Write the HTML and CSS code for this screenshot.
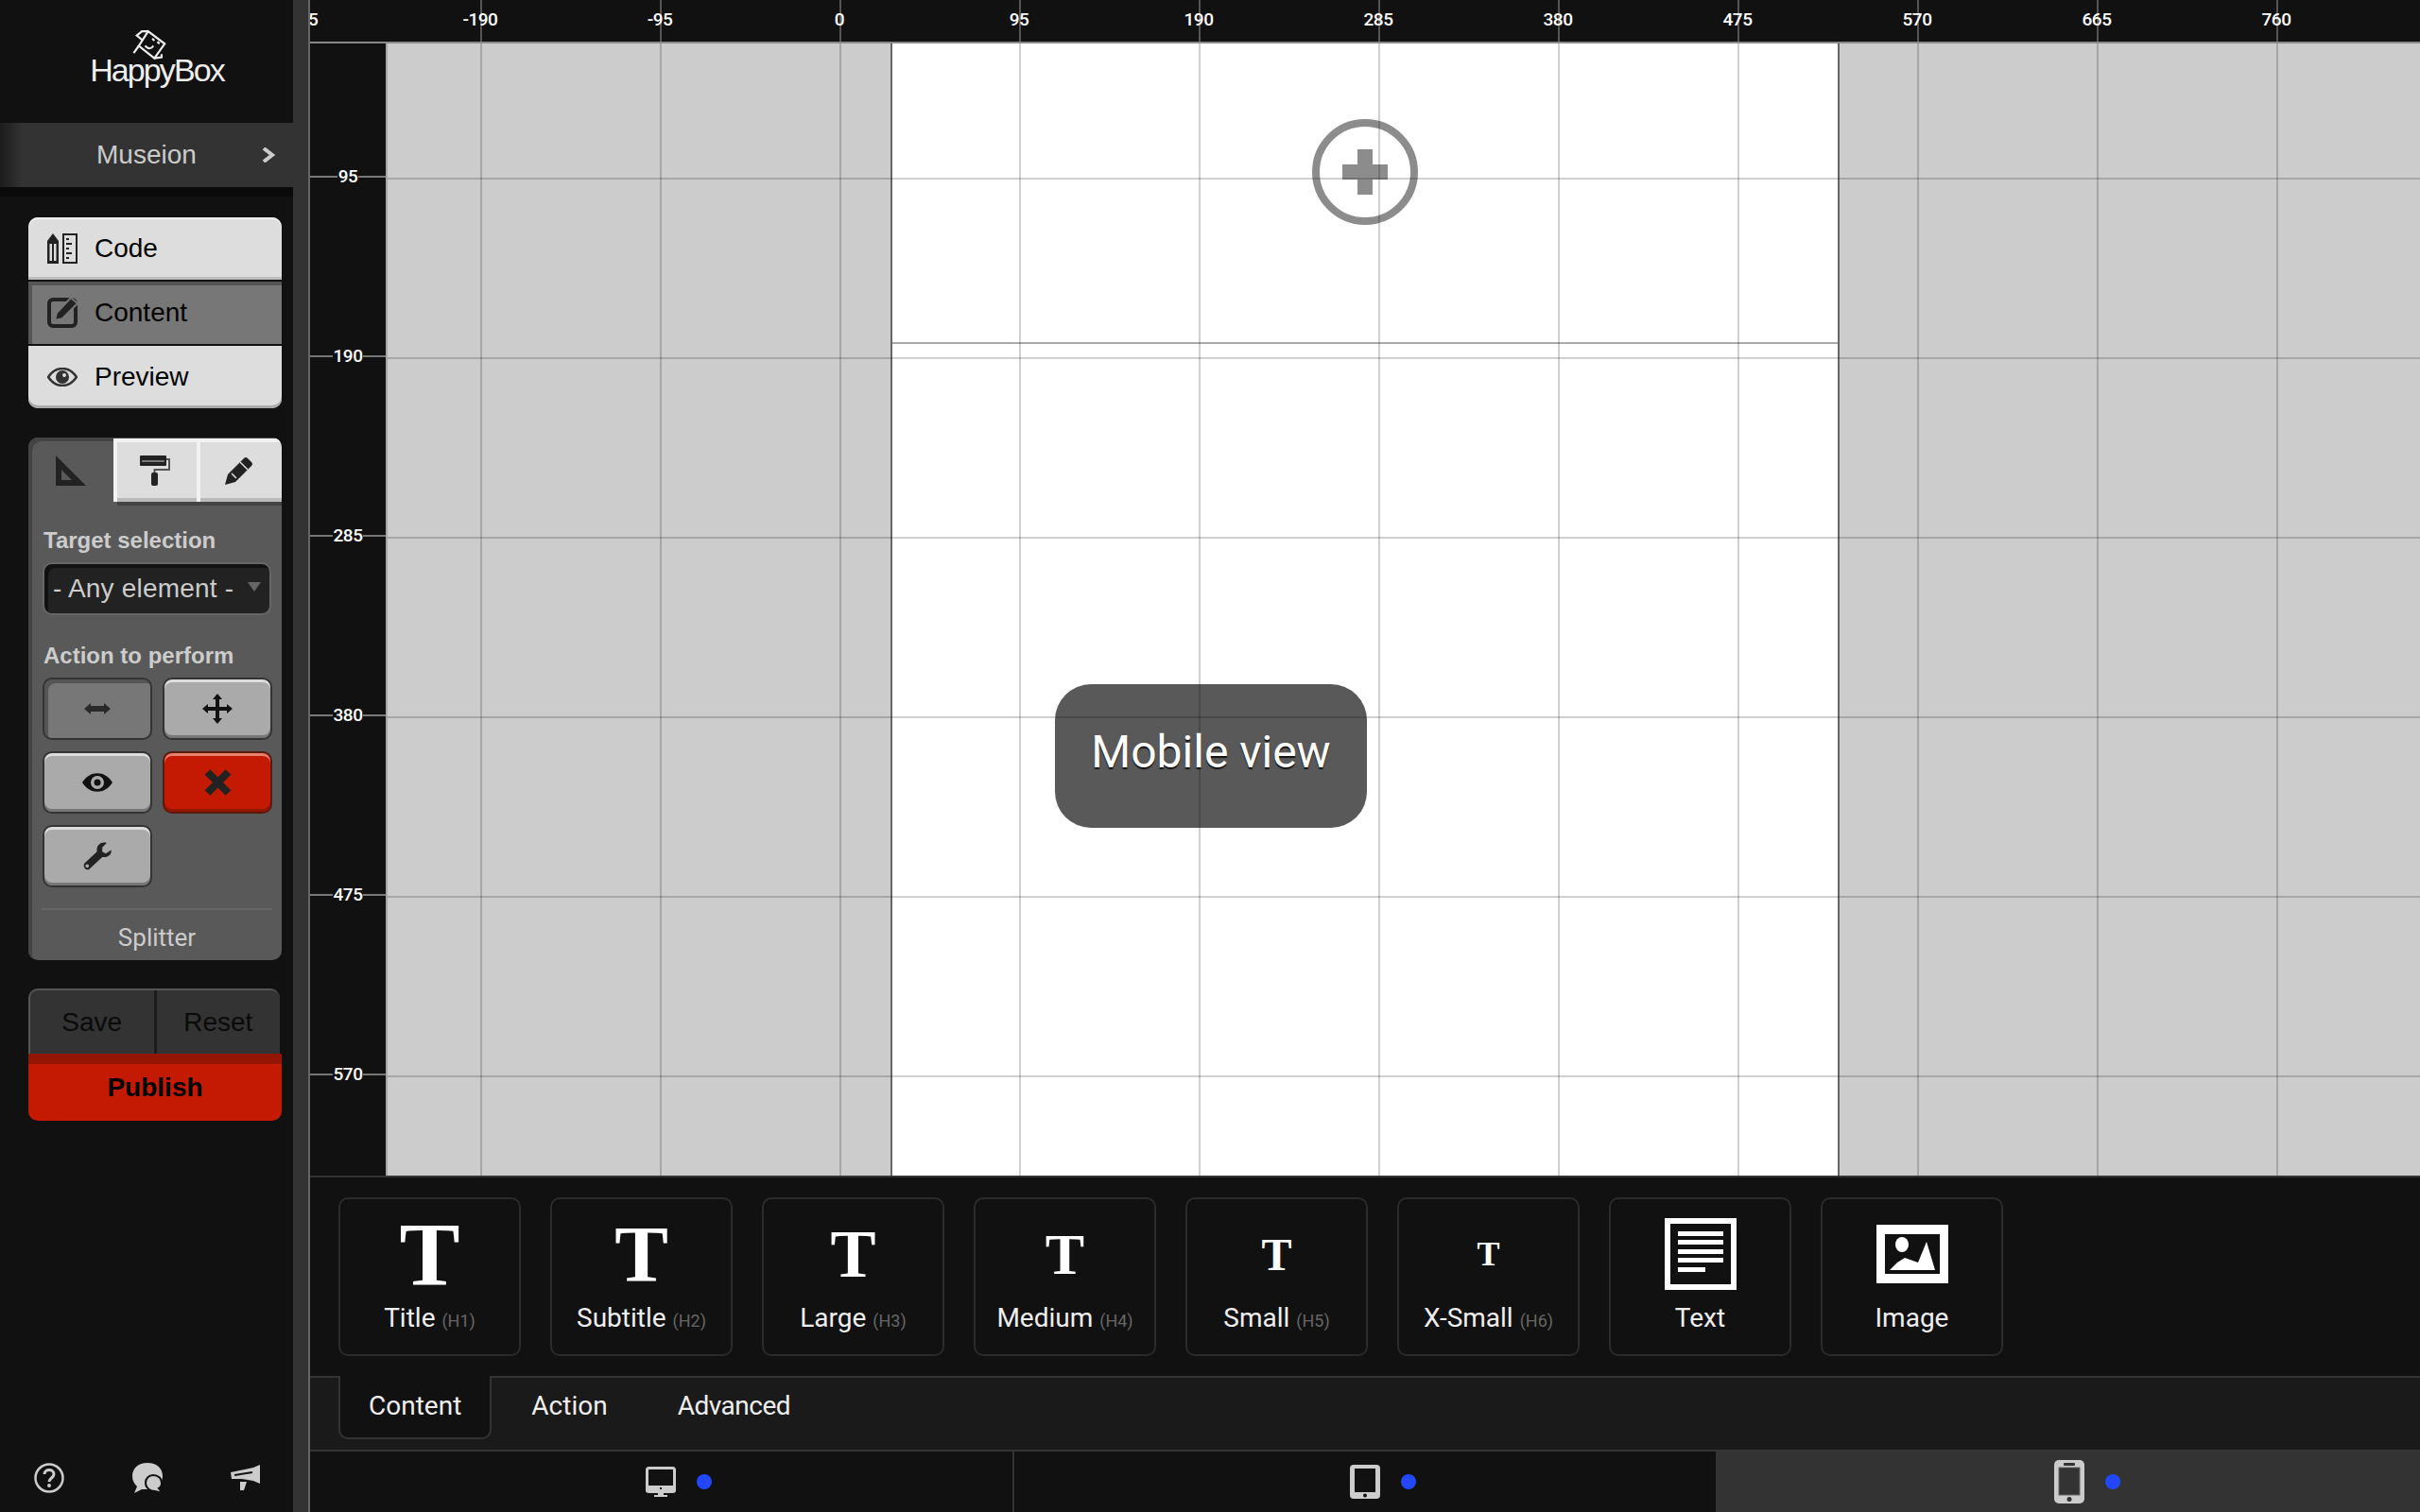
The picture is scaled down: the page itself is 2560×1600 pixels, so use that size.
FILE: index.html
```html
<!DOCTYPE html>
<html>
  <head>
    <meta charset="utf-8">
    <title>HappyBox</title>
    <link rel="stylesheet" href="styles.css">
  </head>
  <body>
    <div class="sidebar">
      <div class="logo">
        <svg class="logo-bot" viewBox="0 0 40 32" width="44" height="35" fill="none" stroke="#eee" stroke-width="2">
          <path d="M17 2 L33 14 L23 28 L8 16 Z"/>
          <path d="M12 11 L6 6 L11 2 L17 2"/>
          <path d="M8 16 L3 23 M23 28 L30 27 L30 24"/>
          <path d="M21 9 L23 11 M26 12 L28 14 M14 16 Q19 21 22 16"/>
        </svg>
        <div class="logo-text">HappyBox</div>
      </div>
      <div class="project">
        <span>Museion</span>
        <svg class="project-arrow" viewBox="0 0 16 16" width="16" height="16" fill="none" stroke="#ccc" stroke-width="4"><path d="M3 1 L12 8 L3 15"/></svg>
      </div>

      <div class="modes">
        <div class="mode mode-first">
          <svg viewBox="0 0 32 32" width="32" height="32">
            <path d="M0 8 L6 0 L12 8 V32 H0 Z" fill="#222"/>
            <rect x="2.5" y="11" width="2.5" height="18" fill="#ddd"/>
            <rect x="7" y="11" width="2.5" height="18" fill="#ddd"/>
            <rect x="17" y="1" width="14" height="30" fill="none" stroke="#222" stroke-width="2"/>
            <path d="M20 6 h3 M20 11 h6 M20 16 h3 M20 21 h6 M20 26 h3" stroke="#222" stroke-width="2"/>
          </svg>
          Code
        </div>
        <div class="mode mode-on">
          <svg viewBox="0 0 32 32" width="32" height="32">
            <rect x="2" y="2" width="28" height="28" rx="4" fill="none" stroke="#222" stroke-width="4"/>
            <path d="M8 24 L10 16 L25 0 L32 6 L16 22 Z" fill="#222" stroke="#777" stroke-width="2"/>
          </svg>
          Content
        </div>
        <div class="mode mode-last">
          <svg viewBox="0 0 32 20" width="32" height="20">
            <path d="M1 10 C9 -2 23 -2 31 10 C23 22 9 22 1 10 Z" fill="#ddd" stroke="#333" stroke-width="2.5"/>
            <circle cx="16" cy="10" r="7" fill="#333"/>
            <circle cx="18" cy="8" r="2" fill="#ddd"/>
          </svg>
          Preview
        </div>
      </div>

      <div class="panel">
        <div class="panel-tabs">
          <div class="panel-tab panel-tab-on">
            <svg viewBox="0 0 32 32" width="32" height="32"><path fill-rule="evenodd" d="M0 0 L32 32 H0 Z M6 15 V26 H17 Z" fill="#222"/></svg>
          </div>
          <div class="panel-tab">
            <svg viewBox="0 0 32 32" width="32" height="32">
              <rect x="0" y="0" width="28" height="11" rx="1" fill="#222"/>
              <rect x="2" y="5" width="24" height="2" fill="#777"/>
              <path d="M28 4 H31 V15 H15.500 V18" fill="none" stroke="#555" stroke-width="2"/>
              <rect x="12" y="18" width="7" height="14" rx="2" fill="#222"/>
            </svg>
          </div>
          <div class="panel-tab">
            <svg viewBox="0 0 32 32" width="32" height="32">
              <path d="M1 31 L4 20 L21 3 Q23 1 25 3 L29 7 Q31 9 29 11 L12 28 Z" fill="#222"/>
              <path d="M8 19 L13 24 M17 7 L25 15" stroke="#ddd" stroke-width="1.500"/>
            </svg>
          </div>
        </div>
        <div class="panel-body">
          <div class="panel-label">Target selection</div>
          <div class="select">
            <span>- Any element -</span>
            <i class="select-arrow"></i>
          </div>
          <div class="panel-label panel-label-next">Action to perform</div>
          <div class="actions">
            <div class="action action-on">
              <svg viewBox="0 0 28 12" width="28" height="12"><path d="M0 6 L7 0 V3 H21 V0 L28 6 L21 12 V9 H7 V12 Z" fill="#2a2a2a"/></svg>
            </div>
            <div class="action">
              <svg viewBox="0 0 32 32" width="32" height="32"><path d="M16 0 L21 6 H18 V14 H26 V11 L32 16 L26 21 V18 H18 V26 H21 L16 32 L11 26 H14 V18 H6 V21 L0 16 L6 11 V14 H14 V6 H11 Z" fill="#111"/></svg>
            </div>
            <div class="action">
              <svg viewBox="0 0 32 20" width="32" height="20">
                <path fill-rule="evenodd" d="M0 10 C8 -3 24 -3 32 10 C24 23 8 23 0 10 Z M16 3 A7 7 0 1 0 16 17 A7 7 0 1 0 16 3 Z" fill="#111"/>
                <circle cx="16" cy="10" r="3.500" fill="#111"/>
              </svg>
            </div>
            <div class="action action-red">
              <svg viewBox="0 0 28 28" width="29" height="28"><path d="M3 3 L25 25 M25 3 L3 25" fill="none" stroke="#222" stroke-width="8"/></svg>
            </div>
            <div class="action">
              <svg viewBox="0 0 32 32" width="31" height="30"><path fill-rule="evenodd" d="M31 9 L25 13 L21 11 L21 6 L26 1 C20 -1 14 3 15 11 L1 24 C-1 27 1 30 3 31 C6 32 7 30 8 29 L21 17 C27 18 32 14 31 9 Z M4 25 A2 2 0 1 0 4 29 A2 2 0 1 0 4 25 Z" fill="#222"/></svg>
            </div>
          </div>
          <div class="panel-line"></div>
          <div class="panel-foot">Splitter</div>
        </div>
      </div>

      <div class="save-row">
        <div class="save-btn">Save</div>
        <div class="save-btn">Reset</div>
      </div>
      <div class="publish">Publish</div>

      <div class="side-foot">
        <svg viewBox="0 0 32 32" width="32" height="32">
          <circle cx="16" cy="16" r="14.500" fill="none" stroke="#ccc" stroke-width="2.500"/>
          <path d="M11 12 C11 6 21 6 21 12 C21 16 16 16 16 20" fill="none" stroke="#ccc" stroke-width="3"/>
          <circle cx="16" cy="24" r="2" fill="#ccc"/>
        </svg>
        <svg viewBox="0 0 32 32" width="32" height="32">
          <path d="M16 0 C26 0 32 6 32 14 C32 22 26 26 22 28 H10 L2 32 L5 25 C2 22 0 19 0 14 C0 6 6 0 16 0 Z" fill="#ccc"/>
          <path d="M22 13 C28 13 31 17 31 21 C31 24 30 26 28 27 L32 32 L24 30 C18 30 14 26 14 21 C14 17 17 13 22 13 Z" fill="#ccc" stroke="#111" stroke-width="2"/>
        </svg>
        <svg viewBox="0 0 32 28" width="32" height="28">
          <path d="M0 8 L24 3 L31 0 V20 L24 17 L12 15 H1 Z" fill="#ccc"/>
          <path d="M4 11 L23 8" stroke="#111" stroke-width="2"/>
          <path d="M10 18 L17 18 L14 27 L10 27 Z" fill="#ccc"/>
        </svg>
      </div>
    </div>
    <div class="sidebar-edge"></div>

    <div class="main">
      <div class="ruler-top">
        <span>-285</span><span>-190</span><span>-95</span><span>0</span><span>95</span><span>190</span><span>285</span><span>380</span><span>475</span><span>570</span><span>665</span><span>760</span>
      </div>
      <div class="stage">
        <div class="ruler-left">
          <div class="rl"><span>95</span></div>
          <div class="rl"><span>190</span></div>
          <div class="rl"><span>285</span></div>
          <div class="rl"><span>380</span></div>
          <div class="rl"><span>475</span></div>
          <div class="rl"><span>570</span></div>
        </div>
        <div class="canvas">
          <div class="page">
            <div class="page-head">
              <svg viewBox="0 0 112 112" width="112" height="112">
                <circle cx="56" cy="56" r="52" fill="none" stroke="#8c8c8c" stroke-width="8"/>
                <path d="M48 32 H64 V48 H80 V64 H64 V80 H48 V64 H32 V48 H48 Z" fill="#8c8c8c"/>
              </svg>
            </div>
          </div>
          <div class="grid-lines"></div>
          <div class="view-tip">Mobile view</div>
        </div>
      </div>

      <div class="items">
        <div class="item"><div class="item-icon t1">T</div><div class="item-name">Title <small>(H1)</small></div></div>
        <div class="item"><div class="item-icon t2">T</div><div class="item-name">Subtitle <small>(H2)</small></div></div>
        <div class="item"><div class="item-icon t3">T</div><div class="item-name">Large <small>(H3)</small></div></div>
        <div class="item"><div class="item-icon t4">T</div><div class="item-name">Medium <small>(H4)</small></div></div>
        <div class="item"><div class="item-icon t5">T</div><div class="item-name">Small <small>(H5)</small></div></div>
        <div class="item"><div class="item-icon t6">T</div><div class="item-name">X-Small <small>(H6)</small></div></div>
        <div class="item">
          <div class="item-icon">
            <svg viewBox="0 0 76 76" width="76" height="76">
              <rect x="3" y="3" width="70" height="70" fill="none" stroke="#fff" stroke-width="6"/>
              <path d="M14 14 H62 V19 H14 Z M14 23 H62 V28 H14 Z M14 33 H62 V38 H14 Z M14 42 H62 V47 H14 Z M14 52 H43 V57 H14 Z" fill="#fff"/>
            </svg>
          </div>
          <div class="item-name">Text</div>
        </div>
        <div class="item">
          <div class="item-icon">
            <svg viewBox="0 0 76 62" width="76" height="62">
              <path fill-rule="evenodd" d="M0 0 H76 V62 H0 Z M9 10 V52 H67 V10 Z" fill="#fff"/>
              <ellipse cx="27" cy="21" rx="7" ry="8" fill="#fff"/>
              <path d="M14 48 L22 40 L30 35 L44 40 L53 18 L62 48 Z" fill="#fff"/>
            </svg>
          </div>
          <div class="item-name">Image</div>
        </div>
      </div>

      <div class="tabs">
        <div class="tab tab-on">Content</div>
        <div class="tab">Action</div>
        <div class="tab">Advanced</div>
      </div>

      <div class="devices">
        <div class="device">
          <svg viewBox="0 0 32 32" width="32" height="32">
            <rect x="1.500" y="1.500" width="29" height="25" rx="2" fill="#111" stroke="#ccc" stroke-width="3"/>
            <rect x="0" y="20" width="32" height="7" rx="2" fill="#ccc"/>
            <rect x="15" y="22" width="2" height="2" fill="#111"/>
            <path d="M13 27 H19 V30 H23 V32 H9 V30 H13 Z" fill="#ccc"/>
          </svg>
          <i class="dot"></i>
        </div>
        <div class="device">
          <svg viewBox="0 0 32 36" width="32" height="36">
            <rect x="0" y="0" width="32" height="36" rx="4" fill="#ccc"/>
            <rect x="5" y="4" width="22" height="25" fill="#111"/>
            <circle cx="16" cy="32.500" r="2" fill="#111"/>
          </svg>
          <i class="dot"></i>
        </div>
        <div class="device device-on">
          <svg viewBox="0 0 32 46" width="32" height="46">
            <rect x="0" y="0" width="32" height="46" rx="5" fill="#ccc"/>
            <rect x="5" y="8" width="22" height="29" fill="#333" stroke="#666"/>
            <rect x="10" y="3" width="12" height="3" rx="1" fill="#333"/>
            <circle cx="16" cy="41.500" r="2.500" fill="#333"/>
          </svg>
          <i class="dot"></i>
        </div>
      </div>
    </div>
  </body>
</html>
```

FILE: styles.css
```css
* { box-sizing: border-box; }
html, body { margin: 0; height: 100%; }
body {
  display: flex;
  height: 1600px;
  overflow: hidden;
  background: #111;
  font-family: "Liberation Sans", Arial, sans-serif;
  color: #ccc;
}

/* left column */
.sidebar {
  width: 310px;
  display: flex;
  flex-direction: column;
  background: #111;
}
.sidebar-edge {
  width: 18px;
  background: #333;
  border-right: 2px solid #666;
}
.logo {
  height: 130px;
  padding: 31px 0 0 22px;
  display: flex;
  flex-direction: column;
  align-items: center;
}
.logo-bot { margin-left: -12px; }
.logo-text {
  margin-top: -11px;
  font-size: 34px;
  line-height: 38px;
  letter-spacing: -1.9px;
  color: #eee;
}
.project {
  height: 78px;
  border-bottom: 10px solid #0a0a0a;
  background: linear-gradient(90deg, #1c1c1c, #333 24px);
  display: flex;
  align-items: center;
  font-size: 28px;
  padding-left: 102px;
}
.project-arrow { margin-left: 68px; }

.modes {
  width: 268px;
  margin: 22px 0 0 30px;
  display: flex;
  flex-direction: column;
  gap: 2px;
}
.mode {
  height: 66px;
  padding-left: 20px;
  display: flex;
  align-items: center;
  gap: 18px;
  font-size: 28px;
  color: #000;
  background: #ddd;
  box-shadow: inset 0 -3px 0 #aaa;
}
.mode-first { border-radius: 10px 10px 0 0; box-shadow: inset 0 2px 0 #eee, inset 0 -3px 0 #bbb; }
.mode-last { border-radius: 0 0 10px 10px; box-shadow: inset 0 -3px 0 #aaa; }
.mode-on { background: #777; box-shadow: inset 4px 4px 0 #555; }

.panel {
  width: 268px;
  height: 553px;
  margin: 31px 0 0 30px;
  background: #595959;
  border-radius: 10px;
  box-shadow: inset 4px 4px 0 #444;
  overflow: hidden;
}
.panel-tabs {
  display: grid;
  grid-template-columns: 90px 88px 90px;
  height: 67px;
  margin-top: 1px;
}
.panel-tab {
  display: flex;
  align-items: center;
  justify-content: center;
  background: #ddd;
  box-shadow: inset 4px 4px 0 #f2f2f2, inset 0 -4px 0 #bbb, 4px 4px 0 #444;
}
.panel-tab-on { background: none; box-shadow: none; }
.panel-body { padding: 27px 11px 0 15px; }
.panel-label {
  margin-left: 1px;
  font-size: 24px;
  line-height: 28px;
  font-weight: bold;
  color: #ccc;
}
.panel-label-next { margin-top: 29px; }
.select {
  height: 56px;
  margin-top: 9px;
  padding: 0 9px;
  display: flex;
  align-items: center;
  justify-content: space-between;
  font-size: 28px;
  letter-spacing: .2px;
  color: #ccc;
  background: #222;
  border: 2px solid #666;
  border-radius: 10px;
  box-shadow: inset 4px 4px 0 #111;
}
.select-arrow {
  width: 0;
  height: 0;
  border-left: 7px solid transparent;
  border-right: 7px solid transparent;
  border-top: 10px solid #666;
  margin-bottom: 4px;
}
.actions {
  margin-top: 9px;
  display: grid;
  grid-template-columns: 116px 116px;
  grid-auto-rows: 66px;
  column-gap: 11px;
  row-gap: 12px;
}
.action {
  display: flex;
  align-items: center;
  justify-content: center;
  background: #aaa;
  border: 2px solid #333;
  border-radius: 10px;
  box-shadow: inset 0 3px 0 #ddd, inset 0 -3px 0 #777;
}
.action-on { background: #777; box-shadow: inset 4px 4px 0 #555; }
.action-red { background: #c41a03; border-color: #5a1a10; box-shadow: inset 0 3px 0 #e88070, inset 0 -3px 0 #951503; }
.panel-line { height: 2px; margin: 22px -1px 0 -1px; background: #666; }
.panel-foot {
  margin-top: 14px;
  text-align: center;
  font-family: Roboto, sans-serif;
  font-size: 26px;
  line-height: 30px;
  color: #ccc;
}

.save-row {
  width: 266px;
  height: 69px;
  margin: 30px 0 0 30px;
  display: flex;
  background: #333;
  border-top: 2px solid #555;
  border-left: 2px solid #555;
  border-radius: 10px 10px 0 0;
  font-size: 28px;
  color: #0a0a0a;
}
.save-btn {
  flex: 1;
  display: flex;
  align-items: center;
  justify-content: center;
}
.save-btn + .save-btn { border-left: 3px solid #1c1c1c; }
.publish {
  width: 268px;
  height: 71px;
  margin-left: 30px;
  padding-bottom: 10px;
  display: flex;
  align-items: center;
  justify-content: center;
  background: #c41a03;
  border-top: 11px solid #951503;
  border-radius: 0 0 10px 10px;
  font-size: 28px;
  font-weight: bold;
  color: #000;
}
.side-foot {
  margin-top: auto;
  padding: 0 0 20px 36px;
  display: flex;
  align-items: center;
  gap: 72px;
}

/* canvas and rulers */
.main {
  flex: 1;
  min-width: 0;
  display: flex;
  flex-direction: column;
  font-family: Roboto, sans-serif;
}
.ruler-top {
  height: 46px;
  flex-shrink: 0;
  display: flex;
  overflow: hidden;
  border-bottom: 2px solid #888;
  background: #111 linear-gradient(90deg, #555 2px, transparent 2px) 180px 0 / 190px 100% repeat-x;
  color: #fff;
  font-size: 19px;
  font-weight: 500;
  letter-spacing: -.5px;
  line-height: 42px;
}
.ruler-top span {
  flex: 0 0 190px;
  text-align: center;
}
.ruler-top span:first-child { margin-left: -105px; }
.stage {
  flex: 1;
  min-height: 0;
  display: flex;
  overflow: hidden;
  border-bottom: 2px solid #333;
}
.ruler-left {
  width: 80px;
  flex-shrink: 0;
  padding-top: 46px;
  background: #111 linear-gradient(#777 2px, transparent 2px) 0 140px / 100% 190px repeat-y;
  color: #fff;
  font-size: 19px;
  font-weight: 500;
  letter-spacing: -.5px;
}
.rl {
  height: 190px;
  display: flex;
  align-items: center;
  justify-content: center;
}
.rl span { background: #111; padding: 0 1px; line-height: 16px; }
.canvas {
  flex: 1;
  position: relative;
  background: #ccc;
  border-left: 2px solid #a5a5a5;
  padding-left: 532px;
}
.page {
  width: 1004px;
  height: 100%;
  background: #fff;
  border-left: 2px solid #666;
  border-right: 2px solid #666;
}
.page-head {
  height: 318px;
  padding-top: 80px;
  display: flex;
  justify-content: center;
  align-items: flex-start;
  border-bottom: 2px solid #aaa;
}
.grid-lines {
  position: absolute;
  inset: 0;
  background-image:
    linear-gradient(90deg, rgba(0,0,0,.18) 2px, transparent 2px),
    linear-gradient(rgba(0,0,0,.18) 2px, transparent 2px);
  background-size: 190px 100%, 100% 190px;
  background-position: 98px 0, 0 142px;
}
.view-tip {
  position: absolute;
  left: 706px;
  top: 678px;
  width: 330px;
  height: 152px;
  padding-top: 44px;
  text-align: center;
  background: rgba(0,0,0,.65);
  border-radius: 38px;
  color: #fff;
  font-size: 48px;
  line-height: 56px;
  text-shadow: 0 2px 1px #111;
}

/* element picker */
.items {
  height: 210px;
  flex-shrink: 0;
  padding: 21px 0 0 30px;
  display: flex;
  gap: 31px;
  background: #111;
}
.item {
  width: 193px;
  height: 168px;
  border: 2px solid #2b2b2b;
  border-radius: 10px;
  text-align: center;
}
.item-icon {
  height: 116px;
  display: flex;
  align-items: center;
  justify-content: center;
  font-family: "Liberation Serif", serif;
  font-weight: bold;
  color: #fff;
}
.t1 { font-size: 96px; }
.t2 { font-size: 85px; }
.t3 { font-size: 72px; }
.t4 { font-size: 62px; }
.t5 { font-size: 48px; }
.t6 { font-size: 36px; }
.item-name {
  margin-top: -8px;
  font-size: 28px;
  line-height: 36px;
  color: #eee;
}
.item-name small { font-size: 18px; color: #666; }

.tabs {
  height: 80px;
  flex-shrink: 0;
  padding-left: 30px;
  display: flex;
  background: #1a1a1a;
  border-top: 2px solid #333;
  border-bottom: 2px solid #333;
}
.tab {
  height: 61px;
  padding: 0 32px;
  margin-right: 10px;
  font-size: 28px;
  line-height: 60px;
  color: #eee;
}
.tab:last-child { letter-spacing: -.5px; }
.tab-on {
  height: 67px;
  margin-top: -2px;
  padding: 2px 30px 0;
  background: #111;
  border: 2px solid #333;
  border-top: 0;
  border-radius: 0 0 10px 10px;
}

.devices { height: 64px; flex-shrink: 0; display: flex; background: #111; }
.device {
  flex: 1;
  display: flex;
  align-items: center;
  justify-content: center;
  border-right: 2px solid #333;
}
.device-on { background: #333; border-right: 0; }
.dot {
  width: 16px;
  height: 16px;
  margin: 0 -38px 0 22px;
  border-radius: 50%;
  background: #2148ff;
}
```
